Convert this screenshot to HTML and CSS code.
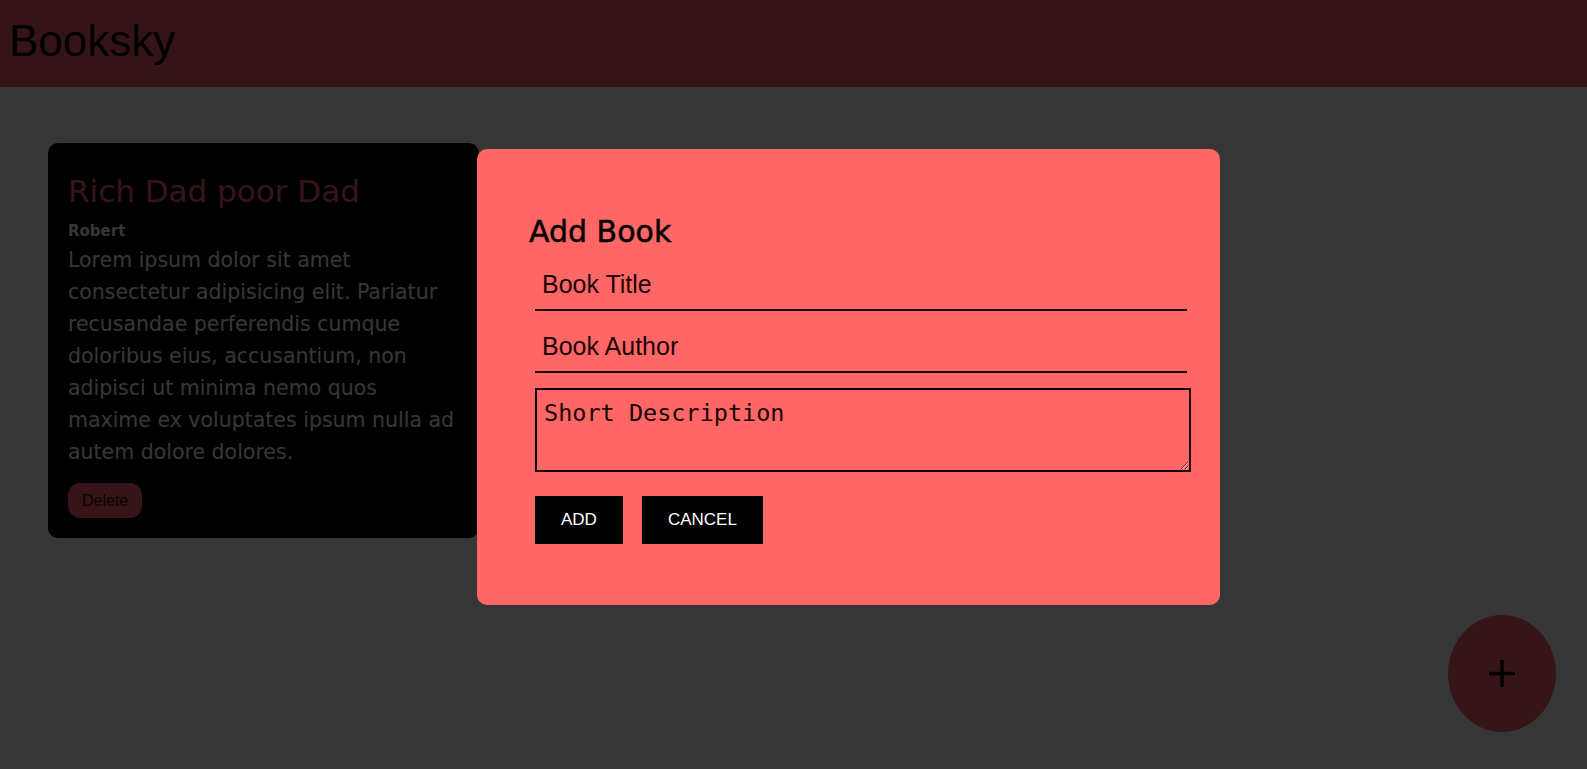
FILE: index.html
```html
<!DOCTYPE html>
<html lang="en">
<head>
<meta charset="utf-8">
<title>Booksky</title>
<link rel="stylesheet" href="styles.css">
</head>
<body>
  <header class="topbar">
    <h1 class="brand">Booksky</h1>
  </header>

  <main class="shelf">
    <article class="book-card">
      <h2 class="book-title">Rich Dad poor Dad</h2>
      <p class="book-author">Robert</p>
      <p class="book-desc">Lorem ipsum dolor sit amet<br>consectetur adipisicing elit. Pariatur<br>recusandae perferendis cumque<br>doloribus eius, accusantium, non<br>adipisci ut minima nemo quos<br>maxime ex voluptates ipsum nulla ad<br>autem dolore dolores.</p>
      <button class="delete-btn" type="button">Delete</button>
    </article>
  </main>

  <button class="fab" type="button" aria-label="Add book">
    <svg class="fab-icon" viewBox="0 0 26 27" width="26" height="27">
      <line x1="13" y1="0" x2="13" y2="27" stroke="#000" stroke-width="3.5"/>
      <line x1="0" y1="13.5" x2="26" y2="13.5" stroke="#000" stroke-width="3.5"/>
    </svg>
  </button>

  <div class="backdrop">
    <form class="modal">
      <h2 class="modal-title">Add Book</h2>
      <div class="fields">
        <input class="line-input" type="text" placeholder="Book Title">
        <input class="line-input" type="text" placeholder="Book Author">
        <textarea class="desc-input" placeholder="Short Description"></textarea>
        <div class="actions">
          <button class="action-btn" type="button">ADD</button>
          <button class="action-btn" type="button">CANCEL</button>
        </div>
      </div>
    </form>
  </div>
</body>
</html>
```

FILE: styles.css
```css
* {
  box-sizing: border-box;
}

html, body {
  margin: 0;
  height: 100%;
}

body {
  background: #ffffff;
  overflow: hidden;
  font-family: "Liberation Sans", Arial, sans-serif;
}

.topbar {
  height: 87px;
  background: #f8606e;
  display: flex;
  align-items: center;
  padding: 0 0 6px 9px;
}

.brand {
  margin: 0;
  font-family: "Liberation Sans", Arial, sans-serif;
  font-size: 44px;
  font-weight: 400;
  color: #000;
}

.shelf {
  padding: 56px 0 0 48px;
}

.book-card {
  width: 431px;
  background: #000;
  border-radius: 10px;
  padding: 28px 20px 20px;
  font-family: "DejaVu Sans", sans-serif;
}

.book-title {
  margin: 0 0 10px;
  font-size: 31px;
  line-height: 40px;
  font-weight: 400;
  color: #ff6677;
}

.book-author {
  margin: 0 0 3px;
  font-size: 15px;
  line-height: 20px;
  font-weight: 700;
  color: #ffffff;
}

.book-desc {
  margin: 0 0 15px;
  font-size: 20.5px;
  line-height: 32px;
  color: #ffffff;
  white-space: nowrap;
}

.delete-btn {
  display: block;
  height: 35px;
  padding: 0 14px;
  border: none;
  border-radius: 12px;
  background: #ff5f6e;
  color: #3a0a0e;
  font-family: "Liberation Sans", Arial, sans-serif;
  font-size: 16px;
}

.fab {
  position: fixed;
  right: 31px;
  bottom: 37px;
  width: 108px;
  height: 117px;
  border: none;
  border-radius: 50%;
  background: #ff6672;
  display: flex;
  align-items: center;
  justify-content: center;
  padding: 0;
}

.fab-icon {
  display: block;
}

.backdrop {
  position: fixed;
  inset: 0;
  background: rgba(0, 0, 0, 0.79);
}

.modal {
  position: absolute;
  left: 477px;
  top: 149px;
  width: 743px;
  height: 456px;
  background: #ff6666;
  border-radius: 10px;
  padding: 65px 29px 0 52px;
}

.modal-title {
  margin: 0 0 15px;
  font-family: "DejaVu Sans", sans-serif;
  font-size: 30px;
  line-height: 36px;
  font-weight: 400;
  color: #000;
  -webkit-text-stroke: 0.5px #000;
}

.fields {
  display: flex;
  flex-direction: column;
  align-items: flex-start;
  padding-left: 6px;
}

.line-input {
  width: 652px;
  height: 46px;
  margin: 0 0 16px;
  padding: 0 7px 5px;
  border: none;
  border-bottom: 2px solid #140000;
  background: transparent;
  font-family: "Liberation Sans", Arial, sans-serif;
  font-size: 25px;
  color: #1a0404;
  outline: none;
}

.line-input::placeholder {
  color: #1a0404;
  opacity: 1;
}

.line-input + .line-input {
  margin-bottom: 15px;
}

.desc-input {
  width: 656px;
  height: 84px;
  margin: 0 0 24px;
  padding: 9px 7px 0;
  border: 2px solid #140000;
  border-radius: 0;
  background: transparent;
  font-family: "DejaVu Sans Mono", monospace;
  font-size: 23.5px;
  color: #1a0404;
  outline: none;
}

.desc-input::placeholder {
  color: #1a0404;
  opacity: 1;
}

.actions {
  display: flex;
  gap: 19px;
}

.action-btn {
  height: 48px;
  padding: 0 26px;
  border: none;
  border-radius: 0;
  background: #000;
  color: #fff;
  font-family: "Liberation Sans", Arial, sans-serif;
  font-size: 17px;
}
```
